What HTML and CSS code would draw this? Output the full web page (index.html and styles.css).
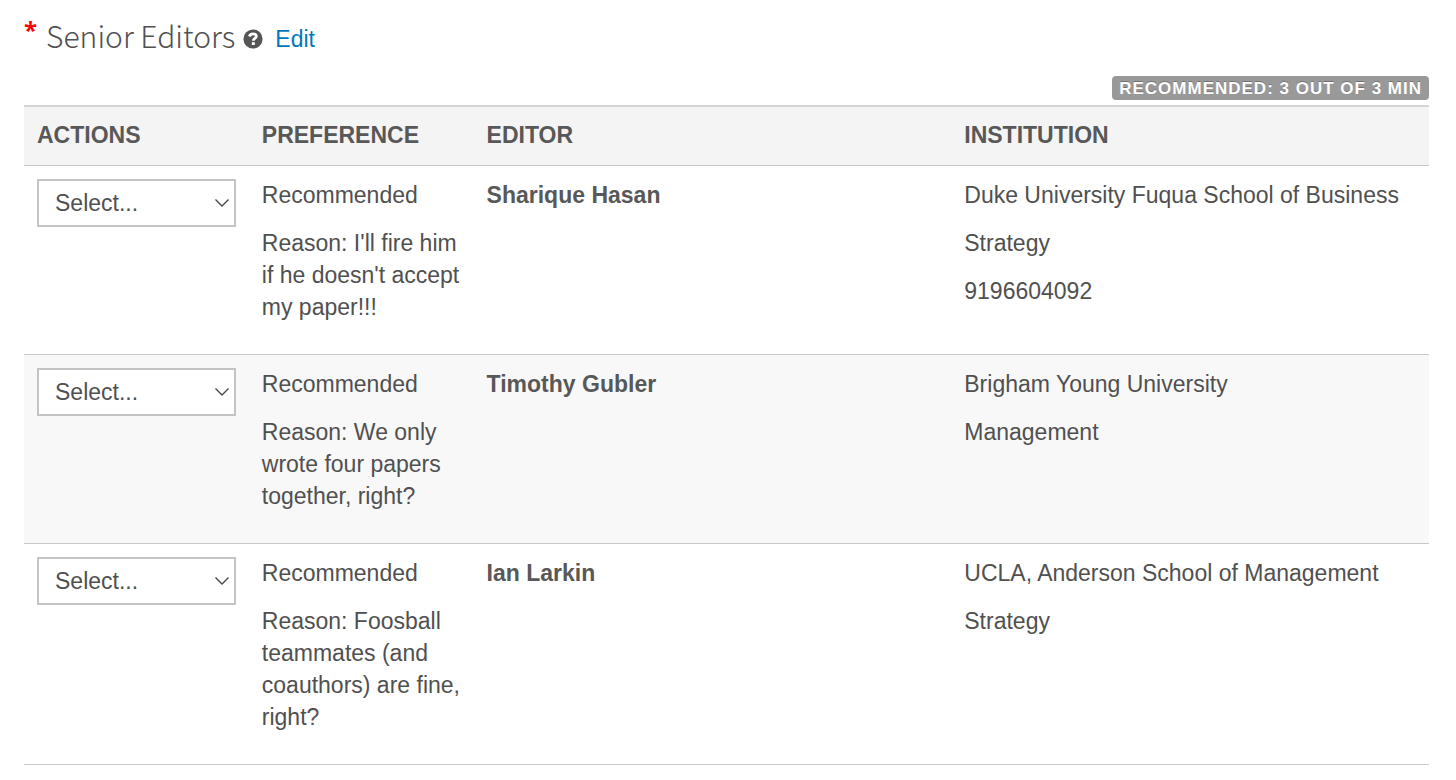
FILE: index.html
```html
<!DOCTYPE html>
<html lang="en">
<head>
  <meta charset="utf-8">
  <title>Senior Editors</title>
  <link rel="stylesheet" href="styles.css">
</head>
<body>
  <header class="section-header">
    <span class="required">*</span>
    <h2>Senior Editors</h2>
    <svg class="help-icon" viewBox="0 0 20 20" role="img" aria-label="Help">
      <circle cx="10" cy="10" r="9.6" fill="#555"/>
      <path d="M6.2 7.4C7 5.6 8.3 4.8 10 4.8c2 0 3.3 1.1 3.3 2.6 0 2-3 2.1-3 4.4" fill="none" stroke="#fff" stroke-width="2.8"/>
      <rect x="8.8" y="13.2" width="3" height="2.8" fill="#fff"/>
    </svg>
    <a class="edit-link" href="#">Edit</a>
  </header>

  <div class="status">
    <span class="badge">RECOMMENDED: 3 OUT OF 3 MIN</span>
  </div>

  <table class="editors">
    <colgroup>
      <col class="col-actions">
      <col class="col-preference">
      <col class="col-editor">
      <col class="col-institution">
    </colgroup>
    <thead>
      <tr>
        <th>ACTIONS</th>
        <th>PREFERENCE</th>
        <th>EDITOR</th>
        <th>INSTITUTION</th>
      </tr>
    </thead>
    <tbody>
      <tr>
        <td><select class="action" aria-label="Action for Sharique Hasan"><option>Select...</option></select></td>
        <td>
          <p>Recommended</p>
          <p>Reason: I'll fire him if he doesn't accept my paper!!!</p>
        </td>
        <td><strong>Sharique Hasan</strong></td>
        <td>
          <p>Duke University Fuqua School of Business</p>
          <p>Strategy</p>
          <p>9196604092</p>
        </td>
      </tr>
      <tr>
        <td><select class="action" aria-label="Action for Timothy Gubler"><option>Select...</option></select></td>
        <td>
          <p>Recommended</p>
          <p>Reason: We only wrote four papers together, right?</p>
        </td>
        <td><strong>Timothy Gubler</strong></td>
        <td>
          <p>Brigham Young University</p>
          <p>Management</p>
        </td>
      </tr>
      <tr>
        <td><select class="action" aria-label="Action for Ian Larkin"><option>Select...</option></select></td>
        <td>
          <p>Recommended</p>
          <p>Reason: Foosball teammates (and coauthors) are fine, right?</p>
        </td>
        <td><strong>Ian Larkin</strong></td>
        <td>
          <p>UCLA, Anderson School of Management</p>
          <p>Strategy</p>
        </td>
      </tr>
    </tbody>
  </table>
</body>
</html>
```

FILE: styles.css
```css
* {
  box-sizing: border-box;
}

body {
  margin: 0;
  padding: 16px 27px 0 24px;
  background: #fff;
  color: #505050;
  font-family: "Liberation Sans", Arial, sans-serif;
  font-size: 23px;
  line-height: 32px;
}

/* Section title */
.section-header {
  display: flex;
  align-items: center;
  height: 44px;
}

.required {
  align-self: flex-start;
  margin-right: 9px;
  color: #f00;
  font-family: "Open Sans", sans-serif;
  font-size: 24px;
  font-weight: bold;
  line-height: 28px;
}

h2 {
  margin: 0 0 6px;
  color: #505050;
  font-family: "Noto Sans CJK SC", sans-serif;
  font-size: 30px;
  font-weight: 300;
}

.help-icon {
  width: 20px;
  height: 20px;
  margin: 2px 12px 0 8px;
}

.edit-link {
  margin-top: 2px;
  color: #0079bc;
  text-decoration: none;
}

/* Counter above the table */
.status {
  display: flex;
  justify-content: flex-end;
  padding: 16px 0 5px;
}

.badge {
  padding: 1px 7px 0;
  border-radius: 4px;
  background: #999;
  color: #fff;
  font-size: 17px;
  font-weight: bold;
  line-height: 23px;
  letter-spacing: 1px;
  text-shadow: 0 -1px 0 rgba(0, 0, 0, 0.25);
}

/* Editors table */
.editors {
  width: 100%;
  border-collapse: collapse;
  table-layout: fixed;
}

.col-actions,
.col-preference {
  width: 16%;
}

.col-editor {
  width: 34%;
}

th,
td {
  padding: 13px 13px 15px;
  border-bottom: 1px solid #c8c8c8;
  text-align: left;
  vertical-align: top;
}

thead th {
  padding: 12px 13px 14px;
  border-top: 2px solid #d4d4d4;
  background: #f4f4f4;
}

th,
strong {
  color: #585858;
}

tbody tr:nth-child(even) {
  background: #f8f8f8;
}

p {
  margin: 0 0 16px;
}

.action {
  display: block;
  width: 100%;
  height: 48px;
  padding: 0 16px;
  border: 2px solid #c4c4c4;
  border-radius: 0;
  appearance: none;
  background: #fff url("data:image/svg+xml,%3Csvg xmlns='http://www.w3.org/2000/svg' width='16' height='10'%3E%3Cpath d='M1.5 1.5l6.5 6.5 6.5-6.5' fill='none' stroke='%23444' stroke-width='1.3'/%3E%3C/svg%3E") no-repeat right 4px center;
  color: #505050;
  font: inherit;
}
```
